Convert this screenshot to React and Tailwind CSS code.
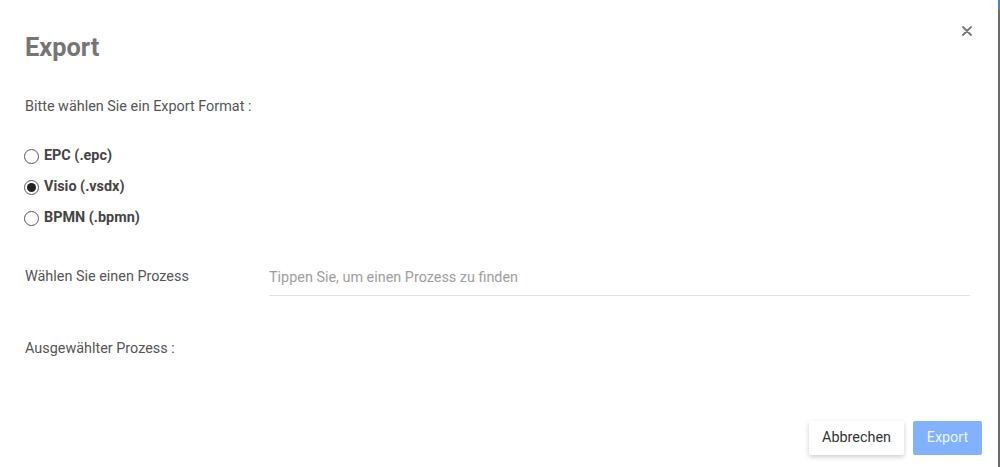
export default function App() {
  const formats = [
    { id: 'epc', label: 'EPC (.epc)', checked: false },
    { id: 'vsdx', label: 'Visio (.vsdx)', checked: true },
    { id: 'bpmn', label: 'BPMN (.bpmn)', checked: false },
  ];

  return (
    <div className="flex w-[1000px] h-[467px] bg-white font-['Roboto',sans-serif] overflow-hidden">
      <div className="relative flex flex-col flex-1 px-[25px] pt-[33px]">
        <button className="absolute right-[26px] top-[26px] text-[#757575] text-[18px] leading-none">
          <svg width="10" height="10" viewBox="0 0 10 10">
            <path d="M1 1 L9 9 M9 1 L1 9" stroke="#757575" strokeWidth="1.8" strokeLinecap="round" />
          </svg>
        </button>

        <h1 className="text-[25.4px] leading-[29px] font-bold text-[#757575]">Export</h1>

        <p className="mt-[35px] text-[14.4px] leading-[20px] text-[#555]">Bitte wählen Sie ein Export Format :</p>

        <div className="mt-[29px] flex flex-col gap-[11px] -ml-[1px]">
          {formats.map((f) => (
            <label key={f.id} className="flex items-center gap-[5px] h-[20px]">
              <span className="w-[15px] h-[15px] rounded-full border border-[#555] flex items-center justify-center bg-white">
                {f.checked && <span className="w-[9px] h-[9px] rounded-full bg-[#222]" />}
              </span>
              <span className="text-[14.4px] font-bold text-[#444]">{f.label}</span>
            </label>
          ))}
        </div>

        <div className="mt-[38px] flex items-start">
          <div className="w-[244px] text-[14.4px] leading-[20px] text-[#555] pt-[1px]">Wählen Sie einen Prozess</div>
          <div className="flex-1 mr-[3px] -mt-[1px] border-b border-[#e0e0e0] pb-[6px]">
            <input
              type="text"
              placeholder="Tippen Sie, um einen Prozess zu finden"
              className="w-full text-[14.4px] leading-[20px] text-[#555] placeholder-[#9e9e9e] outline-none bg-transparent"
            />
          </div>
        </div>

        <div className="mt-[43px] text-[14.4px] leading-[20px] text-[#555]">Ausgewählter Prozess :</div>

        <div className="mt-auto mb-[12px] flex justify-end gap-[9px] mr-[-9px]">
          <button className="h-[34px] px-[13px] bg-white rounded-[2px] text-[14.4px] text-[#333] shadow-[0_2px_5px_rgba(0,0,0,0.2)]">
            Abbrechen
          </button>
          <button className="h-[34px] w-[69px] bg-[#82b1ff] rounded-[2px] text-[14.4px] text-[#eef4ff]">
            Export
          </button>
        </div>
      </div>
      <div className="w-[2px] flex flex-col bg-[#6b6b6b]">
        <div className="h-[10px] bg-[#4a7fd4]" />
      </div>
    </div>
  );
}
